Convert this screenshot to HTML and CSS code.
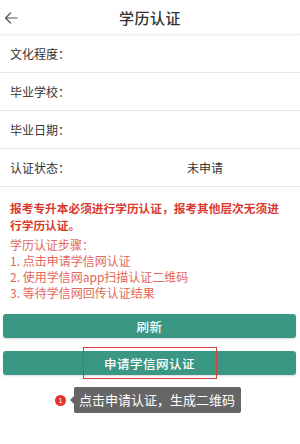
FILE: index.html
```html
<!DOCTYPE html>
<html lang="zh-CN">
<head>
<meta charset="utf-8">
<title>学历认证</title>
<link rel="stylesheet" href="styles.css">
</head>
<body>
<div class="page">
  <header class="topbar">
    <svg class="back" width="14" height="12" viewBox="0 0 14 12"><path d="M13 6H1.5M6.5 1L1.5 6l5 5" fill="none" stroke="#555" stroke-width="1.2" stroke-linecap="round" stroke-linejoin="round"/></svg>
    <h1 class="title">学历认证</h1>
  </header>
  <div class="row"><span class="label">文化程度：</span><span class="value"></span></div>
  <div class="row"><span class="label">毕业学校：</span><span class="value"></span></div>
  <div class="row"><span class="label">毕业日期：</span><span class="value"></span></div>
  <div class="row"><span class="label">认证状态：</span><span class="value">未申请</span></div>
  <p class="notice">报考专升本必须进行学历认证，报考其他层次无须进<br>行学历认证。</p>
  <div class="steps">
    <div>学历认证步骤：</div>
    <div>1. 点击申请学信网认证</div>
    <div>2. 使用学信网app扫描认证二维码</div>
    <div>3. 等待学信网回传认证结果</div>
  </div>
  <div class="btn">刷新</div>
  <div class="btn apply"><span class="highlight"></span>申请学信网认证</div>
  <div class="tip-wrap">
    <span class="badge">1</span>
    <span class="tip">点击申请认证，生成二维码</span>
  </div>
</div>
</body>
</html>
```
FILE: styles.css
```css
* { box-sizing: border-box; }
html, body { margin: 0; padding: 0; background: #fff; }
body {
  font-family: "Noto Sans CJK SC", "Noto Sans", sans-serif;
  color: #333;
  width: 300px;
  height: 444px;
  overflow: hidden;
}
.topbar {
  position: relative;
  height: 35px;
  border-bottom: 1px solid #ececec;
  box-shadow: 0 1px 2px rgba(0,0,0,0.04);
  display: flex;
  align-items: center;
  justify-content: center;
}
.back { position: absolute; left: 4px; top: 12px; }
.title {
  margin: 0;
  font-size: 15px;
  font-weight: 500;
  color: #333;
  letter-spacing: 0.5px;
}
.row {
  height: 38px;
  border-bottom: 1px solid #e6e6e6;
  display: grid;
  grid-template-columns: 177px 1fr;
  align-items: center;
  padding-left: 10px;
  font-size: 12px;
  color: #333;
}
.row .value { font-size: 12px; }
.notice {
  margin: 12px 0 0;
  padding: 0 6px 0 10px;
  font-size: 11.7px;
  line-height: 17px;
  font-weight: 700;
  color: #d93a30;
}
.steps {
  margin-top: 4px;
  padding-left: 10px;
  font-size: 12px;
  line-height: 16px;
  color: #e2675c;
}
.btn {
  position: relative;
  margin: 13px 4px 0 3px;
  height: 24px;
  border-radius: 3px;
  background: #3a9783;
  color: #fff;
  font-size: 12.5px;
  font-weight: 500;
  display: flex;
  align-items: center;
  justify-content: center;
  letter-spacing: 0.5px;
  box-shadow: 0 1px 2px rgba(0,0,0,0.15);
}
.btn.apply { margin-top: 13px; }
.highlight {
  position: absolute;
  left: 80px;
  top: -4px;
  width: 134px;
  height: 32px;
  border: 1.5px solid #d8413a;
}
.tip-wrap {
  position: relative;
  margin-top: 12px;
  padding-left: 55px;
  display: flex;
  align-items: center;
}
.badge {
  width: 11px;
  height: 11px;
  border-radius: 50%;
  background: #e8322e;
  color: #fff;
  font-size: 7px;
  line-height: 11px;
  text-align: center;
  font-family: "Liberation Sans", sans-serif;
}
.tip {
  position: relative;
  margin-left: 8px;
  background: #666;
  color: #fff;
  font-size: 13px;
  height: 26px;
  line-height: 26px;
  padding: 0 6px 0 5px;
  border-radius: 2px;
}
.tip::before {
  content: "";
  position: absolute;
  left: -4px;
  top: 9px;
  border-top: 4px solid transparent;
  border-bottom: 4px solid transparent;
  border-right: 4px solid #666;
}
```
